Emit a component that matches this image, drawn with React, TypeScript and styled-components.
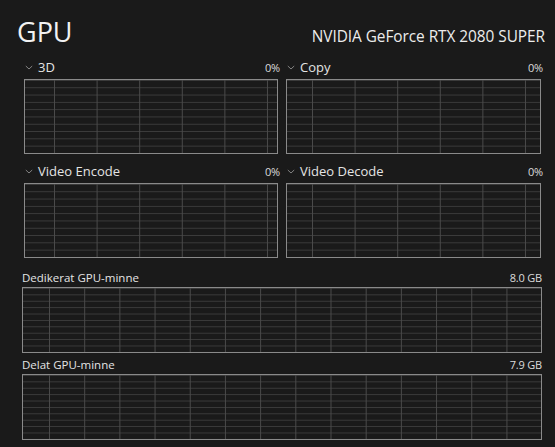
import React from "react";
import styled, { createGlobalStyle } from "styled-components";

const GlobalStyle = createGlobalStyle`
  html, body {
    margin: 0;
    padding: 0;
    background: #1a1a1a;
  }
  body {
    font-family: "Open Sans", "Noto Sans", "Liberation Sans", sans-serif;
    color: #e8e8e8;
  }
`;

const Page = styled.div`
  width: 555px;
  height: 447px;
  box-sizing: border-box;
  padding: 15px 12px 0 17px;
  background: #1a1a1a;
  overflow: hidden;
`;

const Header = styled.header`
  display: flex;
  justify-content: space-between;
  align-items: baseline;
  height: 34px;
`;

const Title = styled.h1`
  margin: 0;
  font-size: 27px;
  font-weight: 400;
  line-height: 34px;
  color: #f2f2f2;
`;

const DeviceName = styled.div`
  margin-right: -2px;
  font-size: 15.4px;
  line-height: 20px;
  color: #ececec;
  letter-spacing: -0.05px;
`;

const EngineGrid = styled.div`
  display: grid;
  grid-template-columns: 256px 257px;
  column-gap: 6px;
  row-gap: 9px;
  margin: 10px 0 0 7px;
`;

const Engine = styled.section`
  display: flex;
  flex-direction: column;
`;

const LabelRow = styled.div<{ $height: number }>`
  display: flex;
  align-items: center;
  justify-content: space-between;
  height: ${({ $height }) => $height}px;
`;

const EngineName = styled.span`
  display: flex;
  align-items: center;
  gap: 5px;
  font-size: 13px;
  color: #e4e4e4;
`;

const Chevron = styled.svg`
  width: 8px;
  height: 5px;
  margin-left: 1px;
`;

const Value = styled.span`
  font-size: 11px;
  color: #dcdcdc;
  letter-spacing: -0.2px;
`;

const MemoryName = styled.span`
  font-size: 11.5px;
  color: #e4e4e4;
`;

const Chart = styled.div<{
  $height: number;
  $col: number;
  $offset: number;
  $trim?: number;
}>`
  box-sizing: border-box;
  height: ${({ $height }) => $height}px;
  margin-right: ${({ $trim = 0 }) => $trim}px;
  border: 1px solid #8a8a8a;
  background-color: #1a1a1a;
  background-image: linear-gradient(
      to right,
      #4a4a4a 0,
      #4a4a4a 1px,
      transparent 1px
    ),
    linear-gradient(to bottom, #3c3c3c 0, #3c3c3c 1px, transparent 1px);
  background-size: ${({ $col }) => $col}px 100%, 100% 10%;
  background-position: ${({ $offset }) => $offset}px 0, 0 0;
`;

const MemorySection = styled.section<{ $top: number }>`
  display: flex;
  flex-direction: column;
  margin: ${({ $top }) => $top}px 1px 0 5px;
`;

const ChartGap = styled.div<{ $size: number }>`
  height: ${({ $size }) => $size}px;
`;

type EngineInfo = { name: string; value: string; offset: number };

const engines: EngineInfo[] = [
  { name: "3D", value: "0%", offset: 29 },
  { name: "Copy", value: "0%", offset: 25 },
  { name: "Video Encode", value: "0%", offset: 29 },
  { name: "Video Decode", value: "0%", offset: 25 },
];

const memory = [
  { name: "Dedikerat GPU-minne", value: "8.0 GB", top: 12 },
  { name: "Delat GPU-minne", value: "7.9 GB", top: 4 },
];

const ChevronIcon = () => (
  <Chevron viewBox="0 0 8 5">
    <polyline
      points="0.8,1 4,4 7.2,1"
      fill="none"
      stroke="#8f8f8f"
      strokeWidth="0.9"
    />
  </Chevron>
);

export default function App() {
  return (
    <Page>
      <GlobalStyle />
      <Header>
        <Title>GPU</Title>
        <DeviceName>NVIDIA GeForce RTX 2080 SUPER</DeviceName>
      </Header>

      <EngineGrid>
        {engines.map((e) => (
          <Engine key={e.name}>
            <LabelRow $height={16}>
              <EngineName>
                <ChevronIcon />
                {e.name}
              </EngineName>
              <Value>{e.value}</Value>
            </LabelRow>
            <ChartGap $size={4} />
            <Chart $height={75} $col={42.6} $offset={e.offset} $trim={2} />
          </Engine>
        ))}
      </EngineGrid>

      {memory.map((m) => (
        <MemorySection key={m.name} $top={m.top}>
          <LabelRow $height={15}>
            <MemoryName>{m.name}</MemoryName>
            <Value>{m.value}</Value>
          </LabelRow>
          <ChartGap $size={2} />
          <Chart $height={66} $col={35.2} $offset={26} />
        </MemorySection>
      ))}
    </Page>
  );
}
